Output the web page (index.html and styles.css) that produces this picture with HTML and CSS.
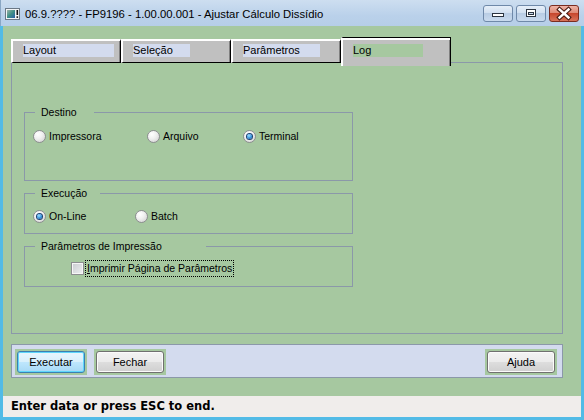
FILE: index.html
```html
<!DOCTYPE html>
<html lang="pt">
<head>
<meta charset="utf-8">
<title>Ajustar Cálculo Dissídio</title>
<link rel="stylesheet" href="styles.css">
</head>
<body>
<div class="window">
  <div class="titlebar">
    <svg class="app-icon" width="15" height="12" viewBox="0 0 15 12">
      <defs>
        <linearGradient id="ig" x1="0" y1="0" x2="1" y2="1">
          <stop offset="0" stop-color="#9fb3a8"/>
          <stop offset="0.5" stop-color="#3f8f86"/>
          <stop offset="1" stop-color="#2a5fa8"/>
        </linearGradient>
      </defs>
      <rect x="0.5" y="0.5" width="14" height="11" fill="#f2f4f6" stroke="#6b7886"/>
      <rect x="2" y="2" width="8" height="8" fill="url(#ig)"/>
      <rect x="11.5" y="2" width="1.6" height="5" fill="#111"/>
      <rect x="11.5" y="8.3" width="1.6" height="1.6" fill="#111"/>
    </svg>
    <span class="title">06.9.???? - FP9196 - 1.00.00.001 - Ajustar Cálculo Dissídio</span>
    <div class="caption">
      <div class="cb">
        <svg width="28" height="15" viewBox="0 0 28 15"><rect x="8.5" y="7.5" width="11" height="3" fill="#fff" stroke="#2b3440"/></svg>
      </div>
      <div class="cb">
        <svg width="28" height="15" viewBox="0 0 28 15"><rect x="9.5" y="3.5" width="9" height="7" fill="#fff" stroke="#2b3440"/><rect x="11.5" y="6.5" width="5" height="2" fill="#c9d8ea" stroke="#2b3440"/></svg>
      </div>
      <div class="cb cb-close">
        <svg width="28" height="15" viewBox="0 0 28 15"><path d="M9.5 3.5 L18.5 11.5 M18.5 3.5 L9.5 11.5" stroke="#4a1b12" stroke-width="4.6" stroke-linecap="square"/><path d="M9.5 3.5 L18.5 11.5 M18.5 3.5 L9.5 11.5" stroke="#ffffff" stroke-width="2.4" stroke-linecap="square"/></svg>
      </div>
    </div>
  </div>
  <div class="frame">
    <div class="client">
      <div class="tabs">
        <div class="tab"><span class="tab-label lw-layout">Layout</span></div>
        <div class="tab"><span class="tab-label lw-selecao">Seleção</span></div>
        <div class="tab"><span class="tab-label lw-param">Parâmetros</span></div>
        <div class="tab tab-active"><span class="tab-label lw-log">Log</span></div>
      </div>
      <div class="panel">
        <fieldset class="group g-destino">
          <legend class="lg lg-destino">Destino</legend>
          <div class="options">
            <label class="opt ow-imp"><span class="radio"></span>Impressora</label>
            <label class="opt ow-arq"><span class="radio"></span>Arquivo</label>
            <label class="opt"><span class="radio on"></span>Terminal</label>
          </div>
        </fieldset>
        <fieldset class="group g-exec">
          <legend class="lg lg-exec">Execução</legend>
          <div class="options">
            <label class="opt ow-online"><span class="radio on"></span>On-Line</label>
            <label class="opt"><span class="radio"></span>Batch</label>
          </div>
        </fieldset>
        <fieldset class="group g-imp">
          <legend class="lg lg-imp">Parâmetros de Impressão</legend>
          <div class="check-row">
            <span class="checkbox"></span>
            <span class="focus"><u>I</u>mprimir Página de Parâmetros</span>
          </div>
        </fieldset>
      </div>
      <div class="buttonbar">
        <div class="btn-wrap"><div class="btn btn-default">Executar</div></div>
        <div class="btn-wrap"><div class="btn">Fechar</div></div>
        <div class="btn-wrap push"><div class="btn">Ajuda</div></div>
      </div>
    </div>
    <div class="status">Enter data or press ESC to end.</div>
  </div>
</div>
</body>
</html>
```
FILE: styles.css
```css
html, body {
  margin: 0;
  padding: 0;
}
body {
  width: 584px;
  height: 420px;
  overflow: hidden;
  font-family: "Liberation Sans", Arial, sans-serif;
  font-size: 10.5px;
  color: #000;
}
.window {
  width: 584px;
  height: 420px;
  display: flex;
  flex-direction: column;
  background: #a6c8a0;
}
.titlebar {
  height: 26px;
  flex: none;
  box-sizing: border-box;
  display: flex;
  align-items: center;
  padding: 0 5px 0 4px;
  background: linear-gradient(#cddef0, #bad1ea 60%, #b6cee8);
  border-left: 1px solid #8aa7c4;
}
.app-icon {
  flex: none;
  margin: 1px 5px 0 0;
}
.title {
  font-family: "Liberation Sans", Arial, sans-serif;
  font-size: 11.3px;
  margin-top: 2px;
  white-space: nowrap;
}
.caption {
  margin-left: auto;
  align-self: flex-start;
  margin-top: 5px;
  display: flex;
  gap: 3px;
}
.cb {
  width: 30px;
  height: 17px;
  box-sizing: border-box;
  border: 1px solid #6f89a9;
  border-radius: 3px;
  background: linear-gradient(#e6eff9, #d2e0f0 45%, #b9cde4 50%, #c9daee);
  display: flex;
}
.cb-close {
  border-color: #7b2c20;
  background: linear-gradient(#efb3a6, #de8a76 45%, #c7472d 50%, #d8735a);
}
.frame {
  flex: 1;
  display: flex;
  flex-direction: column;
  border-style: solid;
  border-color: #52bbe6;
  border-width: 0 3px 3px 3px;
}
.client {
  flex: 1;
  box-sizing: border-box;
  padding: 11px 0 0 8px;
}
.tabs {
  display: flex;
  align-items: flex-start;
  height: 25px;
  position: relative;
  z-index: 1;
}
.tab {
  box-sizing: border-box;
  width: 110px;
  height: 24px;
  margin-top: 2px;
  background: #c0c0c0;
  border-top: 2px solid #fff;
  border-left: 2px solid #fff;
  border-right: 1px solid #000;
  border-bottom: 1px solid #000;
  box-shadow: inset -1px 0 0 #808080;
  padding: 3px 0 0 10px;
  font-size: 11px;
}
.tab-active {
  height: 29px;
  margin-top: 0;
  border-top: 1px solid #000;
  border-bottom: none;
  box-shadow: inset 0 2px 0 #fff, inset -1px 0 0 #808080;
  padding-top: 6px;
}
.tab-label {
  display: block;
  height: 13px;
  line-height: 13px;
  background: #d3dbee;
  white-space: nowrap;
  overflow: hidden;
}
.lw-layout { width: 91px; }
.lw-selecao { width: 57px; }
.lw-param { width: 77px; }
.lw-log { width: 70px; background: #a6c8a0; }
.panel {
  box-sizing: border-box;
  width: 552px;
  height: 272px;
  border: 1px solid #8b98a9;
  padding: 43px 0 0 12px;
  display: flex;
  flex-direction: column;
  gap: 6px;
}
.group {
  margin: 0;
  min-width: 0;
  box-sizing: border-box;
  width: 329px;
  border: 1px solid #8b98a9;
  padding: 0 0 0 8px;
}
.g-destino { height: 75px; padding-top: 11px; }
.g-exec { height: 47px; padding-top: 10px; }
.g-imp { height: 47px; padding-top: 7px; }
.lg {
  box-sizing: border-box;
  height: 13px;
  line-height: 13px;
  margin-left: 2px;
  padding: 0 0 0 6px;
  white-space: nowrap;
}
.lg-destino { width: 59px; }
.lg-exec { width: 65px; }
.lg-imp { width: 171px; }
.options {
  display: flex;
  align-items: center;
  height: 13px;
}
.opt {
  display: flex;
  align-items: center;
  gap: 3px;
  line-height: 13px;
  white-space: nowrap;
}
.ow-imp { width: 114px; }
.ow-arq { width: 96px; }
.ow-online { width: 102px; }
.radio {
  flex: none;
  width: 13px;
  height: 13px;
  box-sizing: border-box;
  border-radius: 50%;
  border: 1px solid #8c8e90;
  background: radial-gradient(circle at 35% 30%, #ffffff 0%, #f1f1f1 40%, #cdcdcd 100%);
  display: flex;
  align-items: center;
  justify-content: center;
}
.radio.on::after {
  content: "";
  width: 5px;
  height: 5px;
  border-radius: 50%;
  background: radial-gradient(circle at 40% 35%, #a7e3ff 0%, #2f8fdc 55%, #0d4a8c 100%);
  box-shadow: 0 0 0 1px #1c3f70;
}
.check-row {
  display: flex;
  align-items: center;
  height: 17px;
  margin-left: 38px;
}
.checkbox {
  flex: none;
  width: 13px;
  height: 13px;
  box-sizing: border-box;
  border: 1px solid #8c8e90;
  background: linear-gradient(135deg, #c9ccd0, #eef0f2);
  box-shadow: inset 0 0 0 1px #f6f6f6;
  margin-right: 1px;
}
.focus {
  border: 1px dotted #000;
  padding: 1px 1px;
  line-height: 13px;
  white-space: nowrap;
}
.focus u {
  text-decoration: underline;
}
.buttonbar {
  box-sizing: border-box;
  width: 552px;
  height: 34px;
  margin-top: 10px;
  background: #d3dbee;
  border: 1px solid #8b98a9;
  display: flex;
  gap: 7px;
  padding: 4px 5px 0 3px;
}
.btn-wrap {
  box-sizing: border-box;
  height: 26px;
  padding: 2px;
  background: #a6c8a0;
}
.push {
  margin-left: auto;
}
.btn {
  box-sizing: border-box;
  width: 68px;
  height: 22px;
  border: 1px solid #707070;
  border-radius: 3px;
  background: linear-gradient(#f3f3f3 0%, #ebebeb 48%, #dddddd 52%, #cfcfcf 100%);
  box-shadow: inset 0 0 0 1px #fbfbfb;
  display: flex;
  align-items: center;
  justify-content: center;
  font-size: 11px;
}
.btn-default {
  border-color: #3c7fb1;
  box-shadow: inset 0 0 0 1px #5fd6fb;
  background: linear-gradient(#eaf6fd 0%, #d9f0fc 48%, #bee6fd 52%, #a7d9f5 100%);
}
.status {
  height: 21px;
  flex: none;
  background: #f0edeb;
  font-family: "DejaVu Sans", Verdana, sans-serif;
  font-weight: bold;
  font-size: 11.5px;
  line-height: 21px;
  padding-left: 8px;
  white-space: nowrap;
}
```
